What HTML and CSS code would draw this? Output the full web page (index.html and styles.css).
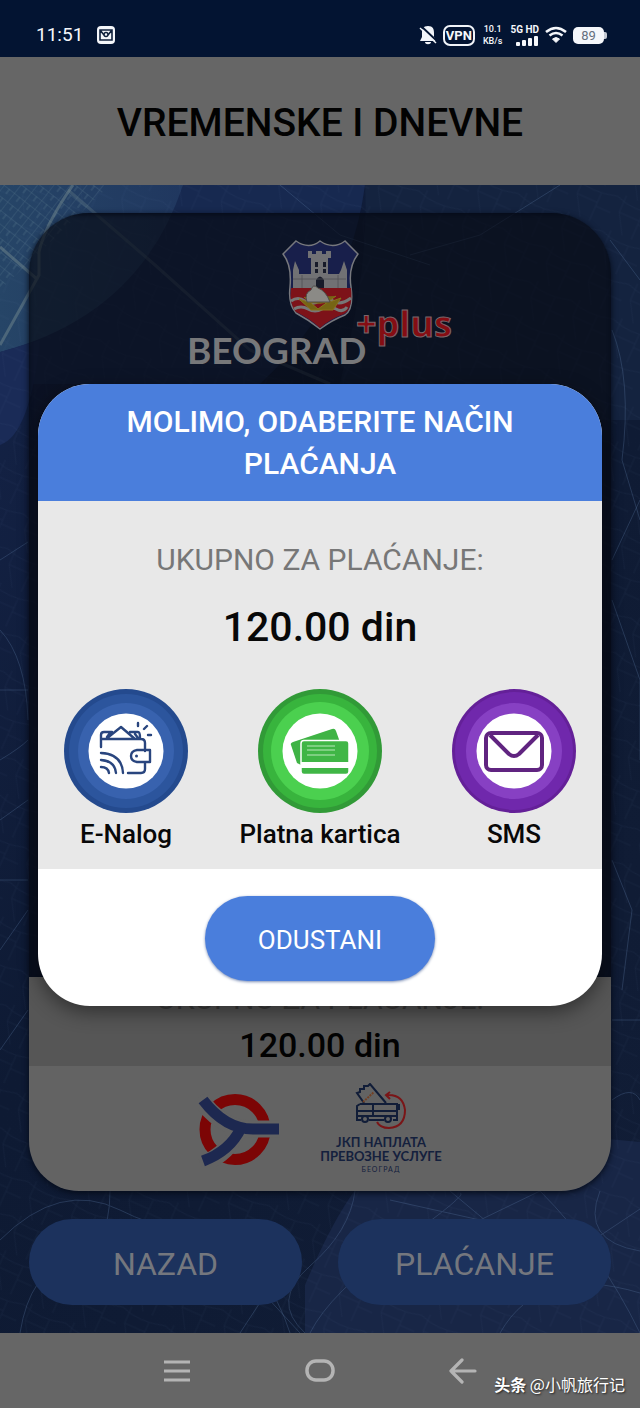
FILE: index.html
```html
<!DOCTYPE html>
<html lang="sr-Latn">
<head>
<meta charset="utf-8">
<meta name="viewport" content="width=device-width, initial-scale=1">
<title>Vremenske i dnevne</title>
<link rel="stylesheet" href="styles.css">
</head>
<body>
<div class="screen">
  <div class="status">
    <span class="clock">11:51</span>
    <svg class="status-mail" width="20" height="20" viewBox="0 0 20 20"><rect x="1" y="1" width="18" height="18" rx="4" fill="#f4f6fa"/><path d="M4 5h12v10H4zM4 5l4 5M16 5l-4 5M6 5h8" fill="none" stroke="#10213c" stroke-width="1.6"/><circle cx="10" cy="9.500" r="2" fill="none" stroke="#10213c" stroke-width="1.400"/></svg>
    <div class="status-right">
      <svg width="18" height="20" viewBox="0 0 18 20"><path d="M9 1c-5 0-6 3-6 7v4l-2 4h16l-2-4V8c0-4-1-7-6-7zM6 17h6c0 3-6 3-6 0z" fill="#f1f4f9"/><path d="M2 1l16 15" stroke="#031432" stroke-width="2"/><path d="M1 3l16 15" stroke="#f1f4f9" stroke-width="1.500"/></svg>
      <span class="vpn">VPN</span>
      <span class="rate">10.1<br>KB/s</span>
      <span class="network"><span>5G HD</span>
        <svg width="24" height="10" viewBox="0 0 24 10" fill="#f5f7fb"><rect x="1" y="6" width="4" height="4" rx="1"/><rect x="7" y="4" width="4" height="6" rx="1"/><rect x="13" y="2" width="4" height="8" rx="1"/><rect x="19" y="0" width="4" height="10" rx="1"/></svg>
      </span>
      <svg width="22" height="18" viewBox="0 0 22 18" fill="none" stroke="#f5f7fb" stroke-width="2.600"><path d="M1 6q10-8 20 0M4.500 9.500q6.500-5 13 0"/><path d="M7.500 13q3.500-3 7 0l-3.500 3.500z" fill="#f5f7fb" stroke-width="1"/></svg>
      <span class="battery">89</span>
    </div>
  </div>

  <header class="header"><h1>VREMENSKE I DNEVNE</h1></header>

  <main class="main">
    <svg class="map" viewBox="0 185 640 1148" preserveAspectRatio="xMidYMid slice" aria-hidden="true">
      <defs>
        <linearGradient id="night" x1="0" y1="0" x2="1" y2="1"><stop offset="0" stop-color="#15244a"/><stop offset=".4" stop-color="#0e1a33"/><stop offset="1" stop-color="#111d36"/></linearGradient>
        <linearGradient id="glow" x1="0" y1="0" x2="1" y2="0"><stop offset="0" stop-color="#264567"/><stop offset="1" stop-color="#20375f"/></linearGradient>
        <pattern id="blocks" width="13" height="11" patternUnits="userSpaceOnUse" patternTransform="rotate(38)"><path d="M0 0H13M0 0V11M7 0v6" fill="none" stroke="#7da0a8" stroke-width=".7"/></pattern>
        <pattern id="lanes" width="46" height="38" patternUnits="userSpaceOnUse" patternTransform="rotate(24)"><path d="M0 4Q20 12 46 4M8 0v18l12 20M30 8v30M30 22h16M8 18h22" fill="none" stroke="#6680ab" stroke-width=".7"/></pattern>
      </defs>
      <rect y="185" width="640" height="1148" fill="url(#night)"/>
      <path d="M0 185H365Q350 300 260 384H0z" fill="#172950"/>
      <path d="M365 185H640V420H330Q370 280 365 185z" fill="#14233f"/>
      <path d="M0 185H183Q140 315 0 352z" fill="url(#glow)"/>
      <path d="M0 352V445Q30 435 40 340z" fill="#1a2b57"/>
      <path d="M305 1333V1285Q330 1225 355 1190Q440 1120 640 1142V1333z" fill="#182646"/>
      <path d="M0 185H110L0 290z" fill="url(#blocks)" opacity=".4"/>
      <rect y="185" width="640" height="1148" fill="url(#lanes)" opacity=".1"/>
      <g fill="none" stroke="#536f99" stroke-width="1" opacity=".35">
        <path d="M0 560l28-18M0 630q26 28 28 90M0 690h28M0 760q20-12 28-20M0 820l28-20M0 880h28M0 950l28-40M0 1050l28-40M280 185l60 50 90 30M560 185l-80 50-70 20M610 240l30 40M612 330q20 50 10 130l18 60M612 560l28-60M612 600l28 80v80M612 860l20 50-10 80M612 1020h28M612 1100q20-15 28 0"/>
        <path d="M0 1240q60-60 120-30t90 10q60 50 80 113M110 1191q0 60-40 70t-50 72M355 1191q-5 40-45 75t-5 67M310 1333q20-40 90-90t60-50M450 1191l60 50 70 8 60-40M600 1191q-20 50 40 60M500 1333q40-70 140-40M240 1333l25-38 35 38M390 1200l90 20 60-29M540 1191q60 60 100 142"/>
      </g>
      <path d="M73 185Q45 225 39 252V275L0 345M0 247l38 33" fill="none" stroke="#71888e" stroke-width="3" opacity=".5"/>
      <path d="M68 190L155 265 250 350 330 384" fill="none" stroke="#71888e" stroke-width="3" opacity=".3"/>
    </svg>

    <section class="ticket">
      <div class="ticket-top">
        <svg class="city-logo" width="270" height="140" viewBox="186 236 270 140" role="img" aria-label="Beograd plus">
          <path d="M297 241Q310 250 321 241Q334 250 346 241L359 254Q349 267 352 287Q355 309 346 315Q333 320 321 329Q310 320 297 313Q289 304 291 287Q293 265 284 254z" fill="#181f4b" stroke="#77787d" stroke-width="1.500"/>
          <path d="M292 288H352Q354 309 345 314Q331 319 321 328Q310 318 297 312Q290 304 292 288z" fill="#7d1219"/>
          <path d="M292 301q7-5 14 0t14 0 14 0 18-3M295 309q7-4 14 0t14 0 14 0 11-2" fill="none" stroke="#777" stroke-width="3"/>
          <path d="M294 288v-18l2-9 4 9v4h12v-16h-3v-7h4v3h4v-3h6v3h4v-3h5v7h-3v16h11l2-4 3-9 3 9v18z" fill="#717174"/>
          <path d="M316 262h3v5h-3zM324 262h3v5h-3zM316 269h3v4h-3zM324 269h3v4h-3zM317 288v-8q4-7 8 0v8z" fill="#171a29"/>
          <path d="M294 279h53M303 275v13M339 275v13" stroke="#505057" stroke-width=".8"/>
          <path d="M300 299q20 9 42-1l-8 12h-22zM305 297l14 12 18-13" fill="#766514" stroke="#88731b"/>
          <path d="M308 302q-3-9 4-12 2-7 7-2 8 3 12 14z" fill="#8b8a86" stroke="#504d4a"/>
          <text class="city-name" x="188" y="364">BEOGRAD</text>
          <text class="city-plus" x="357" y="337">+plus</text>
        </svg>
      </div>
      <div class="ticket-total"><p>UKUPNO ZA PLAĆANJE:</p><strong>120.00 din</strong></div>
      <div class="partners">
        <svg width="82" height="76" viewBox="199 1090 82 76" role="img" aria-label="Gradski prevoz">
          <circle cx="236" cy="1128.500" r="30" fill="none" stroke="#7c0505" stroke-width="11"/>
          <g fill="none" stroke="#636363" stroke-width="17"><path d="M200 1096Q221 1128 254 1128H281M241 1126Q231 1152 202 1164"/></g>
          <g fill="none" stroke="#1d2850" stroke-width="11"><path d="M204 1099Q226 1128 254 1128H280M242 1127Q231 1150 204 1160"/></g>
        </svg>
        <div class="payment-company">
          <svg width="54" height="46" viewBox="356 1084 54 46" fill="none" stroke="#111d38" stroke-width="2" aria-hidden="true">
            <path d="M366 1104l-7-10 3-1 0-3 4 0 0-3 4 0 2-2 16 19"/><path d="M365 1103l11-10" stroke="#734024" stroke-dasharray="2 1"/>
            <path d="M362 1105H399V1121H395M386 1121H371M363 1121H359V1107l3-2M359 1112H398M375 1105v13M398 1106h3v5M360 1117H398"/>
            <circle cx="367" cy="1120" r="3"/><circle cx="390" cy="1120" r="3"/>
            <path d="M389 1096q16-1 18 15 0 17-16 18-9 0-12-6M392 1093l-4 3 4 4" stroke="#7a1517"/>
          </svg>
          <strong lang="sr-Cyrl">ЈКП НАПЛАТА<br>ПРЕВОЗНЕ УСЛУГЕ</strong><small lang="sr-Cyrl">БЕОГРАД</small>
        </div>
      </div>
    </section>
    <div class="actions"><button type="button">NAZAD</button><button type="button">PLAĆANJE</button></div>
  </main>

  <nav class="navigation" aria-label="Sistem">
    <button type="button" aria-label="Meni"><svg width="30" height="26" viewBox="0 0 30 26" stroke="#b4b4b4" stroke-width="3"><path d="M2 4h26M2 13h26M2 22h26"/></svg></button>
    <button type="button" aria-label="Početna"><svg width="30" height="26" viewBox="0 0 30 26" fill="none" stroke="#b4b4b4" stroke-width="3.500"><rect x="2" y="3" width="26" height="19" rx="9"/></svg></button>
    <button type="button" aria-label="Nazad"><svg width="30" height="26" viewBox="0 0 30 26" fill="none" stroke="#b4b4b4" stroke-width="3.200" stroke-linecap="round" stroke-linejoin="round"><path d="M27 13H3M14 2L3 13l11 11"/></svg></button>
    <span class="watermark" lang="zh"><b>头条</b> @小帆旅行记</span>
  </nav>

  <div class="overlay">
    <section class="dialog" role="dialog" aria-modal="true" aria-labelledby="dialog-title">
      <h2 class="dialog-title" id="dialog-title">MOLIMO, ODABERITE NAČIN PLAĆANJA</h2>
      <div class="dialog-body">
        <p class="amount-label">UKUPNO ZA PLAĆANJE:</p>
        <p class="amount">120.00 din</p>
        <div class="methods">
          <button type="button" class="method">
            <svg viewBox="0 0 124 124" aria-hidden="true"><circle cx="62" cy="62" r="62" fill="#244a8e"/><circle cx="62" cy="62" r="57" fill="#2c559d"/><circle cx="62" cy="62" r="48" fill="#3862ae"/><circle cx="62" cy="62" r="37.500" fill="#fff"/>
              <g fill="none" stroke="#29457e" stroke-width="2.400" stroke-linecap="round" stroke-linejoin="round"><path d="M37 58V46q0-3 3-3H48M66 43h8q2 0 2 6M37 50H77q4 0 4 4v8M42 50L57 38 71 50M43 48l3-4M71 45l3 4M64 84H77q4 0 4-4v-7M86 61H73q-6 1-6 6t6 6H86zM37 64q21 1 22 20M37 71q14 1 15 13M37 78q7 0 8 6M74 34v3M83 37l-3 3M84 46h3"/></g><circle cx="72.500" cy="67" r="1.500" fill="#29457e"/></svg>
            <span>E-Nalog</span></button>
          <button type="button" class="method">
            <svg viewBox="0 0 124 124" aria-hidden="true"><circle cx="62" cy="62" r="62" fill="#319a37"/><circle cx="62" cy="62" r="57" fill="#38b43d"/><circle cx="62" cy="62" r="49" fill="#4bd04f"/><circle cx="62" cy="62" r="37.500" fill="#fff"/>
              <path d="M35 53L74 40q3-1 4 2l10 28-45 6-4-2-6-18q-1-2 2-3z" fill="#3fb345"/><rect x="43" y="51.500" width="48" height="34" rx="3" fill="#40b646" stroke="#fff" stroke-width="1.500"/><path d="M43 73H91v6H43z" fill="#fff"/><path d="M49 57h28M49 61h28M49 66h28" stroke="#b9e8ba" stroke-width="1"/></svg>
            <span>Platna kartica</span></button>
          <button type="button" class="method">
            <svg viewBox="0 0 124 124" aria-hidden="true"><circle cx="62" cy="62" r="62" fill="#642098"/><circle cx="62" cy="62" r="59" fill="#7028ac"/><circle cx="62" cy="62" r="48" fill="#8740c3"/><circle cx="62" cy="62" r="37.500" fill="#fff"/>
              <g fill="none" stroke="#602480" stroke-width="4" stroke-linejoin="round"><rect x="34" y="44" width="56" height="37" rx="5"/><path d="M38 46L57 65q5 4 10 0L86 46"/></g></svg>
            <span>SMS</span></button>
        </div>
      </div>
      <div class="dialog-footer"><button type="button" class="cancel">ODUSTANI</button></div>
    </section>
  </div>
</div>
</body>
</html>
```
FILE: styles.css
```css
* { box-sizing: border-box; }
body { margin: 0; background: #071326; font-family: Roboto, "Liberation Sans", sans-serif; }
h1, h2, p { margin: 0; font-weight: 400; }
button { border: 0; padding: 0; font: inherit; cursor: pointer; }
svg { display: block; flex: none; }
.screen { position: relative; display: flex; flex-direction: column; min-height: 100vh; }

.status { display: flex; align-items: center; height: 57px; padding: 13px 36px 0 36px; background: #031432; color: #f5f7fb; }
.clock { font-size: 19px; line-height: 24px; }
.status-mail { margin-left: 13px; }
.status-right { display: flex; align-items: center; gap: 6px; margin-left: auto; }
.vpn { border: 2px solid #f1f4f9; border-radius: 7px; padding: 0 1px; font-size: 13px; line-height: 17px; font-weight: 700; }
.rate { padding: 0 2px; text-align: center; font-size: 9px; line-height: 12px; font-weight: 500; }
.network { display: flex; flex-direction: column; align-items: flex-end; font-size: 10px; line-height: 12px; font-weight: 700; }
.battery { position: relative; width: 31px; border-radius: 5px; background: #f5f7fb; color: #66707f; text-align: center; font-size: 13px; line-height: 17px; }
.battery::after { content: ""; position: absolute; right: -3px; top: 5px; width: 3px; height: 7px; border-radius: 0 2px 2px 0; background: #c5cad4; }

.header { display: flex; align-items: center; justify-content: center; height: 128px; padding-top: 4px; background: #666; color: #020202; }
.header h1 { font-size: 39px; line-height: 48px; font-weight: 500; }

.main { position: relative; flex: 1; display: flex; flex-direction: column; gap: 28px; padding: 28px 29px; isolation: isolate; }
.map { position: absolute; inset: 0; width: 100%; height: 100%; z-index: -1; }
.ticket { flex: 1; display: flex; flex-direction: column; overflow: hidden; border-radius: 60px 60px 50px 50px; box-shadow: 0 2px 6px #050b18; }
.ticket-top { flex: 1; min-height: 764px; display: flex; justify-content: center; padding-top: 23px; background: rgba(7, 10, 20, .67); box-shadow: inset 0 2px 4px #060c1a; }
.city-name { font: 700 37px Lato, sans-serif; fill: #77787a; }
.city-plus { font: 700 36px "Open Sans", sans-serif; fill: #850d13; stroke: #77676c; stroke-width: 1; }
.ticket-total { display: flex; flex-direction: column; align-items: center; gap: 8px; padding: 4px 0 1px; background: #565656; color: #020202; }
.ticket-total p { color: #3c3c3c; font-size: 30px; line-height: 36px; }
.ticket-total strong { font-size: 34px; line-height: 40px; font-weight: 500; }
.partners { display: flex; justify-content: center; align-items: center; gap: 40px; min-height: 125px; background: #636363; }
.payment-company { display: flex; flex-direction: column; align-items: center; color: #14203d; text-align: center; }
.payment-company strong { margin-top: 6px; font: 700 13px/14px Lato, sans-serif; }
.payment-company small { font: 400 7px/12px Lato, sans-serif; letter-spacing: 1px; }
.actions { display: flex; gap: 36px; }
.actions button { flex: 1; height: 86px; border-radius: 43px; background: #1c325d; color: #74777e; font-size: 32px; line-height: 38px; padding-top: 4px; }

.navigation { position: relative; display: flex; align-items: center; justify-content: center; gap: 113px; height: 75px; background: #666; }
.navigation button { background: none; }
.watermark { position: absolute; right: 15px; bottom: 12px; color: #fff; text-shadow: 1px 1px 2px #222; font: 400 16px/24px "Noto Sans CJK SC", sans-serif; }

.overlay { position: absolute; inset: 57px 0 75px; display: flex; align-items: center; justify-content: center; padding: 0 38px; }
.dialog { width: 100%; overflow: hidden; border-radius: 52px; background: #fff; box-shadow: 0 6px 20px rgba(0, 0, 0, .45); }
.dialog-title { padding: 17px 70px 16px; background: #4a7edc; color: #fff; text-align: center; font-size: 30px; line-height: 42px; font-weight: 500; }
.dialog-body { padding: 42px 26px 19px; background: #e8e8e8; text-align: center; }
.amount-label { color: #777; font-size: 30px; line-height: 34px; }
.amount { margin-top: 25px; color: #080808; font-size: 41px; line-height: 50px; font-weight: 500; }
.methods { display: flex; justify-content: space-between; margin-top: 37px; }
.method { display: flex; flex-direction: column; align-items: center; gap: 5px; width: 124px; background: none; color: #080808; font-size: 26px; line-height: 32px; font-weight: 500; white-space: nowrap; }
.method svg { width: 124px; height: 124px; }
.dialog-footer { display: flex; justify-content: center; padding: 27px 0 25px; }
.cancel { width: 230px; height: 85px; border-radius: 43px; background: #4a7edc; color: #fff; box-shadow: 0 1px 3px #7a8db5; font-size: 26px; line-height: 32px; padding-top: 2px; }
```
